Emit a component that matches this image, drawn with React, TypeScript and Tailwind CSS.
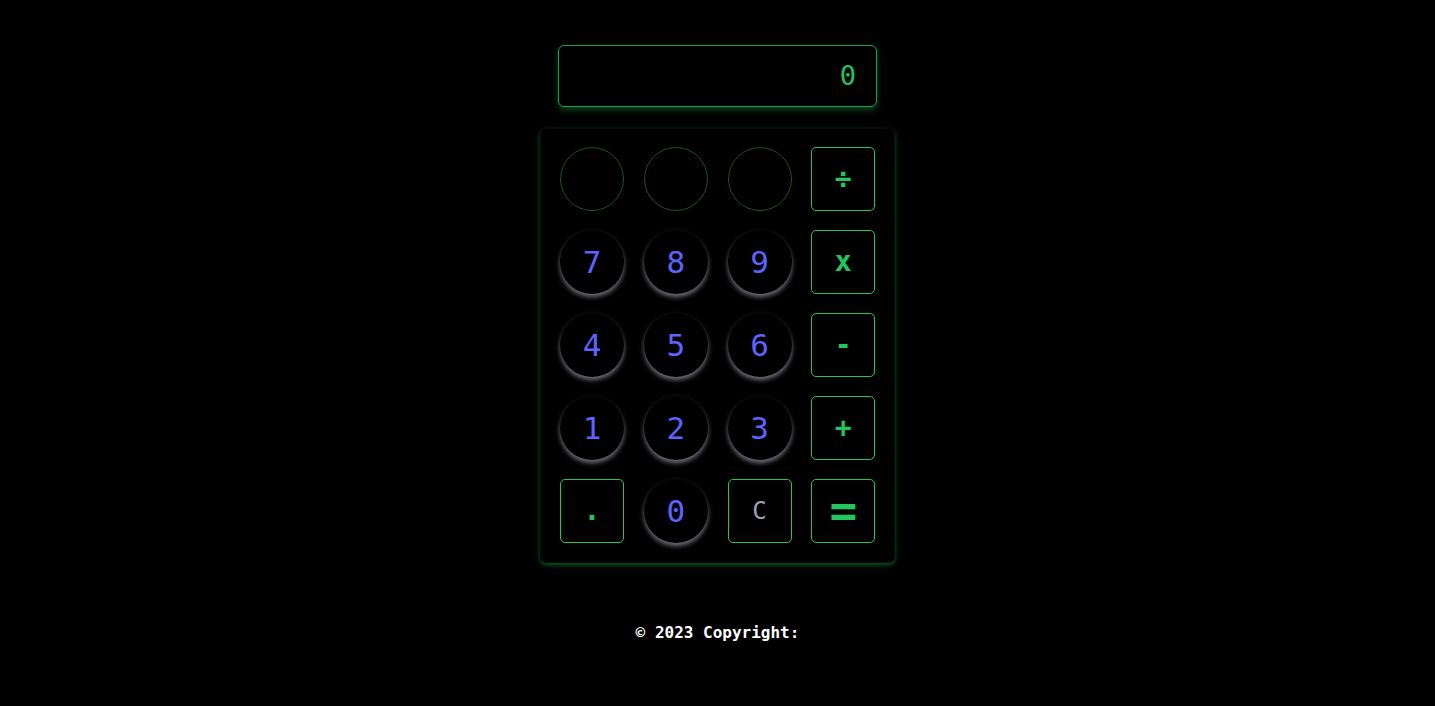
import React, { useState } from 'react';

const mono = "font-['DejaVu_Sans_Mono','Liberation_Mono',monospace]";

const RoundKey: React.FC<{ label?: string; onClick?: () => void }> = ({ label, onClick }) =>
  label ? (
    <button
      onClick={onClick}
      className="w-16 h-16 rounded-full bg-black text-[#5c63ff] text-[31px] flex items-center justify-center shadow-[0_3px_5px_rgba(210,210,230,0.55)]"
    >
      {label}
    </button>
  ) : (
    <div className="w-16 h-16 rounded-full border border-[#14532d]" />
  );

const SquareKey: React.FC<{ label: string; className?: string; onClick?: () => void }> = ({ label, className, onClick }) => (
  <button
    onClick={onClick}
    className={`w-16 h-16 rounded-[5px] border border-[#22c55e] bg-black flex items-center justify-center ${className ?? 'text-[#22c55e] text-[28px] font-semibold'}`}
  >
    {label}
  </button>
);

export default function App() {
  const [display, setDisplay] = useState('0');

  const press = (k: string) => setDisplay((d) => (d === '0' ? k : d + k));
  const clear = () => setDisplay('0');
  const calc = () => {
    try {
      const v = Function(`return (${display.replace(/x/g, '*').replace(/÷/g, '/')})`)();
      setDisplay(String(v));
    } catch {
      setDisplay('0');
    }
  };

  return (
    <div className={`min-h-screen bg-black flex flex-col items-center pt-[45px] ${mono}`}>
      <div className="w-[319px] h-[62px] rounded-[6px] border border-[#1f9e4c] flex items-center justify-end pr-5 text-[#22c55e] text-[27px] shadow-[0_3px_6px_rgba(34,197,94,0.35)]">
        {display}
      </div>

      <div className="mt-[21px] w-[355px] pt-[18px] px-[19px] pb-[19px] rounded-[7px] border border-[#040d07] shadow-[0_2px_5px_rgba(34,197,94,0.45)]">
        <div className="grid grid-cols-4 gap-x-5 gap-y-[19px]">
          <RoundKey />
          <RoundKey />
          <RoundKey />
          <SquareKey label="÷" onClick={() => press('÷')} />

          <RoundKey label="7" onClick={() => press('7')} />
          <RoundKey label="8" onClick={() => press('8')} />
          <RoundKey label="9" onClick={() => press('9')} />
          <SquareKey label="x" onClick={() => press('x')} />

          <RoundKey label="4" onClick={() => press('4')} />
          <RoundKey label="5" onClick={() => press('5')} />
          <RoundKey label="6" onClick={() => press('6')} />
          <SquareKey label="-" onClick={() => press('-')} />

          <RoundKey label="1" onClick={() => press('1')} />
          <RoundKey label="2" onClick={() => press('2')} />
          <RoundKey label="3" onClick={() => press('3')} />
          <SquareKey label="+" onClick={() => press('+')} />

          <SquareKey label="." onClick={() => press('.')} />
          <RoundKey label="0" onClick={() => press('0')} />
          <SquareKey label="C" className="text-[#94a3b8] text-[24px]" onClick={clear} />
          <SquareKey label="=" className="text-[#22c55e] text-[46px] font-bold" onClick={calc} />
        </div>
      </div>

      <p className="mt-[58px] text-white text-base font-semibold">© 2023 Copyright:</p>
    </div>
  );
}
